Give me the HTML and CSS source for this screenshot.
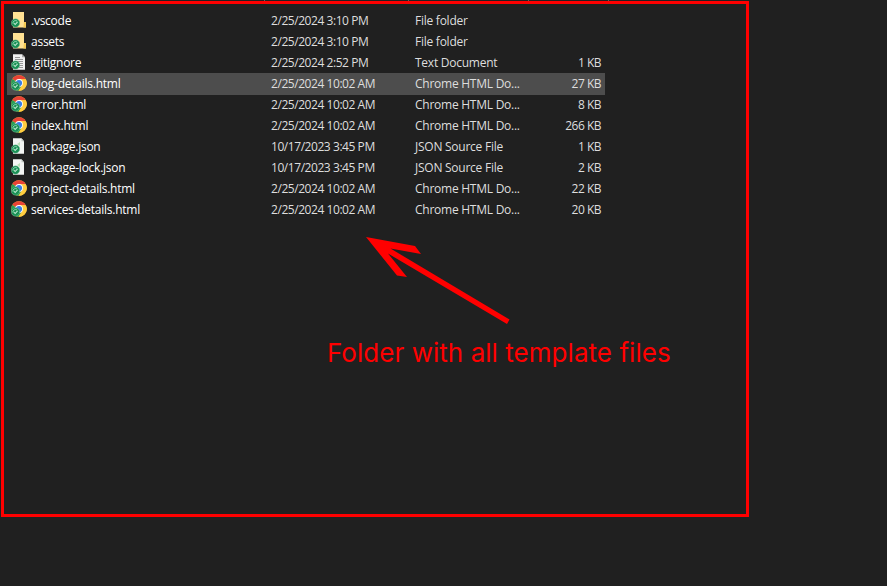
FILE: index.html
```
<!DOCTYPE html>
<html lang="en">
<head>
<meta charset="utf-8">
<title>Template files</title>
<link rel="stylesheet" href="styles.css">
</head>
<body>
<svg class="sprite" aria-hidden="true">
  <symbol id="badge" viewBox="0 0 10 10">
    <circle cx="4.8" cy="5" r="4.5" fill="#189055" stroke="#8fcaa9" stroke-width=".5"/>
    <path d="M2 5.5a2.8 2.8 0 0 1 4.4-2.6" fill="none" stroke="#a5dfbf" stroke-width=".9"/>
    <path d="M3 5 4.400 6.600 7 3.800" fill="none" stroke="#c3ecd5" stroke-width="1.1"/>
  </symbol>
  <symbol id="folder" viewBox="0 0 16 16">
    <path d="M2 0h11v10h2v5.5H2z" fill="#ffe193"/>
    <path d="M13 10h2v5.5h-2.6z" fill="#f4ca55"/>
    <use href="#badge" x="0" y="6.3" width="9.4" height="9.4"/>
  </symbol>
  <symbol id="text" viewBox="0 0 16 16">
    <path d="M2 .3h9l3 3v12.4H2z" fill="#f1f1f1"/>
    <path d="M11 .3v3h3z" fill="#a9a9a9"/>
    <path d="M4 3.5h5M4 5.5h8M4 7.5h8M8 9.5h4M8 11.5h4M8 13.5h4" stroke="#8c8c8c" stroke-width=".9"/>
    <use href="#badge" x="0" y="6.3" width="9.4" height="9.4"/>
  </symbol>
  <symbol id="json" viewBox="0 0 16 16">
    <path d="M2 .3h8.5l2.500 3v12.4H2z" fill="#f3f5f3"/>
    <path d="M10.500 .3v3h2.500z" fill="#c2c8c3"/>
    <path d="M6 6l3-2v4z" fill="#b9dfb5"/>
    <use href="#badge" x="0" y="6.3" width="9.4" height="9.4"/>
  </symbol>
  <symbol id="chrome" viewBox="0 0 16 16">
    <circle cx="8" cy="8" r="7.8" fill="#ffcd40"/>
    <path d="M8 8 1.2 4.1A7.8 7.8 0 0 1 14.8 4.2H8z" fill="#e94336"/>
    <path d="M8 8 1.2 4.1A7.8 7.8 0 0 0 7.6 15.8L11.3 10z" fill="#279d53"/>
    <path d="M8 4.2h6.8A7.8 7.8 0 0 1 7.6 15.8L11.3 10z" fill="#ffcd40"/>
    <circle cx="8" cy="8" r="3.9" fill="#fff"/>
    <circle cx="8" cy="8" r="3.1" fill="#377fe5"/>
    <use href="#badge" x="0" y="6.3" width="9.4" height="9.4"/>
  </symbol>
</svg>
<div class="headings"><i></i><i></i><i></i><i></i></div>
<main class="frame">
  <ul class="files">
    <li class="file"><svg class="icon"><use href="#folder"/></svg><span class="name">.vscode</span><span class="date">2/25/2024 3:10 PM</span><span>File folder</span><span></span></li>
    <li class="file"><svg class="icon"><use href="#folder"/></svg><span class="name">assets</span><span class="date">2/25/2024 3:10 PM</span><span>File folder</span><span></span></li>
    <li class="file"><svg class="icon"><use href="#text"/></svg><span class="name">.gitignore</span><span class="date">2/25/2024 2:52 PM</span><span>Text Document</span><span class="size">1 KB</span></li>
    <li class="file selected"><svg class="icon"><use href="#chrome"/></svg><span class="name">blog-details.html</span><span class="date">2/25/2024 10:02 AM</span><span>Chrome HTML Do...</span><span class="size">27 KB</span></li>
    <li class="file"><svg class="icon"><use href="#chrome"/></svg><span class="name">error.html</span><span class="date">2/25/2024 10:02 AM</span><span>Chrome HTML Do...</span><span class="size">8 KB</span></li>
    <li class="file"><svg class="icon"><use href="#chrome"/></svg><span class="name">index.html</span><span class="date">2/25/2024 10:02 AM</span><span>Chrome HTML Do...</span><span class="size">266 KB</span></li>
    <li class="file"><svg class="icon"><use href="#json"/></svg><span class="name">package.json</span><span class="date">10/17/2023 3:45 PM</span><span>JSON Source File</span><span class="size">1 KB</span></li>
    <li class="file"><svg class="icon"><use href="#json"/></svg><span class="name">package-lock.json</span><span class="date">10/17/2023 3:45 PM</span><span>JSON Source File</span><span class="size">2 KB</span></li>
    <li class="file"><svg class="icon"><use href="#chrome"/></svg><span class="name">project-details.html</span><span class="date">2/25/2024 10:02 AM</span><span>Chrome HTML Do...</span><span class="size">22 KB</span></li>
    <li class="file"><svg class="icon"><use href="#chrome"/></svg><span class="name">services-details.html</span><span class="date">2/25/2024 10:02 AM</span><span>Chrome HTML Do...</span><span class="size">20 KB</span></li>
  </ul>
  <svg class="arrow" viewBox="366 237 144 88">
    <path d="M366 237 415 246 421 254 390.500 248.500 509.500 319.500 507 324 388 253.500 407 277 397 275.500z" fill="#f00"/>
  </svg>
  <p class="note">Folder with all template files</p>
</main>
</body>
</html>
```
FILE: styles.css
```
* { box-sizing: border-box; }
body {
  margin: 0;
  height: 586px;
  overflow: hidden;
  background: #202020;
  color: #dedede;
  font: 12px/21px "Open Sans", "Noto Sans", sans-serif;
}
.sprite { position: absolute; width: 0; height: 0; }
.headings {
  display: grid;
  grid-template-columns: 144px 120px 80px 1px;
  height: 1px;
  margin-left: 264px;
}
.headings i { width: 1px; background: #636363; }
.frame {
  width: 748px;
  height: 516px;
  margin-left: 1px;
  padding: 6px 3px;
  border: 3px solid #f00;
}
.files { margin: 0; padding: 0; list-style: none; }
.file {
  display: grid;
  grid-template-columns: 20px 240px 144px 110px 76px;
  width: 598px;
  height: 21px;
  padding-left: 4px;
  white-space: nowrap;
  letter-spacing: -0.25px;
}
.selected { background: #4d4d4d; box-shadow: 0 1px #4d4d4d; }
.icon { width: 16px; height: 16px; margin-top: 2px; }
.name { color: #fff; }
.date { letter-spacing: -0.44px; }
.size { text-align: right; letter-spacing: -0.5px; }
.arrow { display: block; width: 144px; height: 88px; margin: 17px 0 0 359px; }
.note {
  margin: 12px 0 0 320px;
  color: #f00;
  font: 26px/32px Inter, sans-serif;
  letter-spacing: 0.04px;
  white-space: nowrap;
}
```
